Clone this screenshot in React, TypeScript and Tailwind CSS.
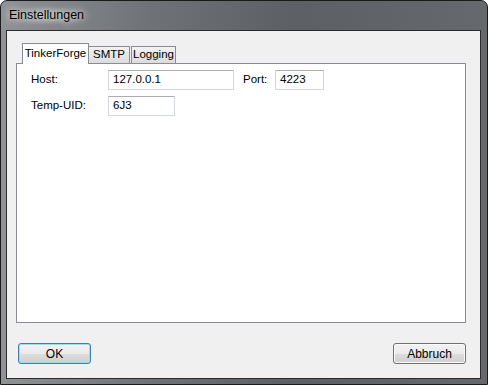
import React from "react";

const font = { fontFamily: '"Liberation Sans", Arial, sans-serif' };

function Field({ w, value }: { w: string; value: string }) {
  return (
    <div
      className={`${w} h-[20px] bg-white border border-[#d3d7de] border-t-[#abadb3] flex items-center pl-[4px] text-[11.5px] text-black`}
    >
      {value}
    </div>
  );
}

export default function App() {
  return (
    <div
      className="w-[488px] h-[385px] rounded-t-[7px] border border-[#1a1a1a] flex flex-col overflow-hidden bg-[linear-gradient(90deg,#909295_0%,#6f7277_30%,#5c5f64_60%,#65686d_100%)]"
      style={font}
    >
      <div className="h-[29px] shrink-0 flex items-center pl-[7px]">
        <span className="text-[12.5px] text-black [text-shadow:0_0_6px_#e8e8e8,0_0_10px_#d0d0d0] bg-[radial-gradient(ellipse_at_center,rgba(200,200,200,0.55),rgba(200,200,200,0)_70%)] px-[1px]">
          Einstellungen
        </span>
      </div>
      <div className="flex-1 flex pl-[5px] pr-[6px] pb-[5px]">
        <div className="flex-1 border border-[#2b2b2b] bg-[#f0f0f0] flex flex-col pl-[9px] pr-[14px] pt-[11px] pb-[14px] text-[11.5px]">
          <div className="flex items-end h-[21px] pl-[6px]">
            <div className="w-[67px] h-[21px] bg-white border border-[#898c95] border-b-0 flex items-center justify-center text-black relative z-10 -mb-px pb-px whitespace-nowrap">
              TinkerForge
            </div>
            <div className="w-[41px] h-[17px] border border-[#898c95] border-b-0 border-l-0 bg-[linear-gradient(#f2f2f2,#dcdcdc)] flex items-center justify-center text-black">
              SMTP
            </div>
            <div className="w-[45px] h-[17px] ml-[1px] border border-[#898c95] border-b-0 bg-[linear-gradient(#f2f2f2,#dcdcdc)] flex items-center justify-center text-black">
              Logging
            </div>
          </div>
          <div className="h-[260px] bg-white border border-[#898c95] flex flex-col pt-[6px] pl-[14px] gap-[6px]">
            <div className="flex items-center">
              <div className="w-[77px] text-black">Host:</div>
              <Field w="w-[126px]" value="127.0.0.1" />
              <div className="w-[32px] ml-[9px] text-black">Port:</div>
              <Field w="w-[49px]" value="4223" />
            </div>
            <div className="flex items-center">
              <div className="w-[77px] text-black">Temp-UID:</div>
              <Field w="w-[67px]" value="6J3" />
            </div>
          </div>
          <div className="flex-1" />
          <div className="flex justify-between pl-[2px]">
            <div className="w-[73px] h-[21px] rounded-[3px] border border-[#3c7fb1] shadow-[0_0_0_1px_#9fdcef_inset] bg-[linear-gradient(#f2f2f2_0%,#ebebeb_50%,#dddddd_51%,#cfcfcf_100%)] flex items-center justify-center text-[12px] text-black">
              OK
            </div>
            <div className="w-[73px] h-[21px] rounded-[3px] border border-[#707070] shadow-[0_0_0_1px_#fbfbfb_inset] bg-[linear-gradient(#f2f2f2_0%,#ebebeb_50%,#dddddd_51%,#cfcfcf_100%)] flex items-center justify-center text-[12px] text-black">
              Abbruch
            </div>
          </div>
        </div>
      </div>
    </div>
  );
}
